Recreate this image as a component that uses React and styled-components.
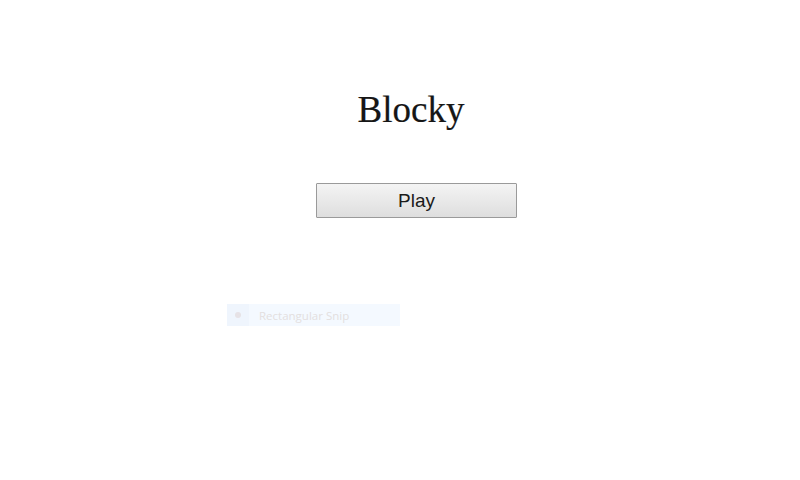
import React from "react";
import styled, { createGlobalStyle } from "styled-components";

const Global = createGlobalStyle`
  html, body { margin: 0; padding: 0; background: #fff; }
  body { width: 800px; height: 480px; overflow: hidden; position: relative; }
`;

const Page = styled.div`
  width: 800px;
  height: 480px;
  position: relative;
  display: flex;
  flex-direction: column;
  align-items: center;
  padding: 86px 0 0 22px;
  box-sizing: border-box;
`;

const Title = styled.h1`
  margin: 0;
  font-family: "Liberation Serif", "Times New Roman", serif;
  font-weight: normal;
  font-size: 37px;
  line-height: 48px;
  color: #161616;
  -webkit-text-stroke: 0.2px #161616;
`;

const PlayButton = styled.button`
  margin-top: 49px;
  width: 201px;
  height: 35px;
  margin-left: 11px;
  border: 1px solid #9a9a9a;
  border-radius: 1px;
  background: linear-gradient(#f4f4f4, #dedede);
  font-family: "Liberation Sans", Arial, sans-serif;
  font-size: 19px;
  color: #1a1a1a;
  padding: 0;
  cursor: pointer;
`;

const Snip = styled.div`
  position: absolute;
  left: 227px;
  top: 304px;
  width: 173px;
  height: 22px;
  background: #f4f9ff;
  display: flex;
  align-items: center;
  font-family: "Open Sans", "Noto Sans", sans-serif;
  font-size: 11.5px;
  color: #e3dfe0;
`;

const SnipIcon = styled.div`
  width: 22px;
  height: 22px;
  display: flex;
  align-items: center;
  justify-content: center;
  background: #eff5fd;
  margin-right: 10px;
`;

const Dot = styled.span`
  width: 6px;
  height: 6px;
  border-radius: 50%;
  background: #e6e2e6;
`;

export default function App() {
  return (
    <>
      <Global />
      <Page>
        <Title>Blocky</Title>
        <PlayButton>Play</PlayButton>
        <Snip>
          <SnipIcon>
            <Dot />
          </SnipIcon>
          Rectangular Snip
        </Snip>
      </Page>
    </>
  );
}
